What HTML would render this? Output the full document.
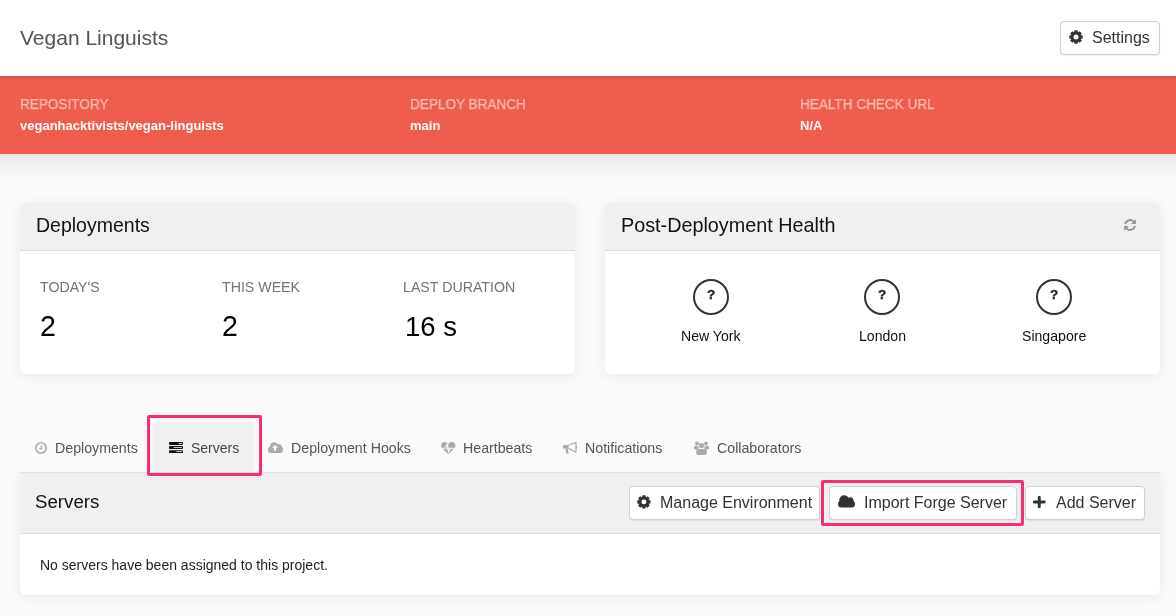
<!DOCTYPE html>
<html><head><meta charset="utf-8">
<style>
*{margin:0;padding:0;box-sizing:border-box}
html,body{width:1176px;height:616px;overflow:hidden}
body{background:#fafafa;font-family:"Liberation Sans",sans-serif;position:relative}
.a{position:absolute;white-space:nowrap;will-change:transform}
#hdr{position:absolute;left:0;top:0;width:1176px;height:76px;background:#fff}
#band{position:absolute;left:0;top:76px;width:1176px;height:78px;background:linear-gradient(rgba(0,0,0,.12),rgba(0,0,0,.04) 3px,rgba(0,0,0,0) 6px),#ee5d4d}
#bandsh{position:absolute;left:0;top:154px;width:1176px;height:36px;background:linear-gradient(#e6e6e6 0px,#ececec 5px,#f2f2f2 12px,#f7f7f7 20px,#f9f9f9 27px,#fafafa 36px)}
.lbl{color:#fbbcb5;-webkit-text-stroke:.25px #fbbcb5;font-size:14.5px;line-height:14.5px;transform:scaleX(.935);transform-origin:0 0}
.val{color:#fff;font-size:13px;line-height:13px;font-weight:bold}
.btn{position:absolute;background:#fff;border:1px solid #cfcfcf;border-radius:4px;box-shadow:0 1px 1px rgba(0,0,0,.08)}
.card{position:absolute;background:#fff;border-radius:6px;box-shadow:0 2px 12px rgba(0,0,0,.075);overflow:hidden}
.chead{position:absolute;left:0;top:0;width:100%;height:48px;background:#f0f0f0;border-bottom:1px solid #dcdcdc}
.stat{color:#6c757d;font-size:14.2px;line-height:14.2px}
.num{color:#000;font-size:27.5px;line-height:27.5px}
.circ{position:absolute;width:36px;height:36px;border:2px solid #333;border-radius:50%}
.q{position:absolute;left:0;top:7.3px;-webkit-text-stroke:.4px #2a2a2a;width:32px;text-align:center;font-weight:bold;font-size:13.5px;line-height:13.5px;color:#2a2a2a;will-change:transform}
.city{color:#111;font-size:14.1px;line-height:14.1px}
.tab{color:#555;font-size:14.2px;line-height:14.2px}
.ico{position:absolute}
.pink{position:absolute;border:3px solid #f72d6f;z-index:5;border-radius:3px}
.bt{color:#333;font-size:16px;line-height:16px}
</style></head><body>
<div id="hdr"></div>
<div class="a" style="left:20px;top:27.1px;font-size:21px;line-height:21px;color:#555">Vegan Linguists</div>
<div class="btn" style="left:1060px;top:21px;width:100px;height:34px"></div>
<svg class="ico" style="left:1068.7px;top:30px" width="14" height="14" viewBox="0 0 14 14"><path fill="#333" fill-rule="evenodd" d="M5.13 2.04 L5.49 0.27 L8.51 0.27 L8.87 2.04 L9.19 2.17 L10.70 1.17 L12.83 3.30 L11.83 4.81 L11.96 5.13 L13.73 5.49 L13.73 8.51 L11.96 8.87 L11.83 9.19 L12.83 10.70 L10.70 12.83 L9.19 11.83 L8.87 11.96 L8.51 13.73 L5.49 13.73 L5.13 11.96 L4.81 11.83 L3.30 12.83 L1.17 10.70 L2.17 9.19 L2.04 8.87 L0.27 8.51 L0.27 5.49 L2.04 5.13 L2.17 4.81 L1.17 3.30 L3.30 1.17 L4.81 2.17 Z M4.50 7.00 a2.50 2.50 0 1 0 5.00 0 a2.50 2.50 0 1 0 -5.00 0 Z"/></svg>
<div class="a bt" style="left:1092px;top:29.6px">Settings</div>

<div id="band"></div>
<div id="bandsh"></div>
<div class="a lbl" style="left:20px;top:96.9px">REPOSITORY</div>
<div class="a val" style="left:20px;top:119px">veganhacktivists/vegan-linguists</div>
<div class="a lbl" style="left:410px;top:96.9px">DEPLOY BRANCH</div>
<div class="a val" style="left:410px;top:119px">main</div>
<div class="a lbl" style="left:800px;top:96.9px">HEALTH CHECK URL</div>
<div class="a val" style="left:800px;top:119px">N/A</div>

<!-- Deployments card -->
<div class="card" style="left:20px;top:203px;width:555px;height:171px"><div class="chead"></div></div>
<div class="a" style="left:36px;top:215.5px;font-size:19.5px;line-height:19.5px;color:#111">Deployments</div>
<div class="a stat" style="left:40px;top:280.1px">TODAY'S</div>
<div class="a stat" style="left:222px;top:280.1px">THIS WEEK</div>
<div class="a stat" style="left:403px;top:280.1px">LAST DURATION</div>
<div class="a num" style="left:39.6px;top:312px;font-size:28.6px;line-height:28.6px">2</div>
<div class="a num" style="left:221.6px;top:312px;font-size:28.6px;line-height:28.6px">2</div>
<div class="a num" style="left:405px;top:313.2px">16 s</div>

<!-- Health card -->
<div class="card" style="left:605px;top:203px;width:555px;height:171px"><div class="chead"></div></div>
<div class="a" style="left:621px;top:215.5px;font-size:19.8px;line-height:19.8px;color:#111">Post-Deployment Health</div>
<svg class="ico" style="left:1124px;top:219px" width="12" height="12" viewBox="0 0 12 12"><g fill="none" stroke="#8b9399" stroke-width="1.8"><path d="M1.2 5.2 A4.9 4.9 0 0 1 9.6 2.6"/><path d="M10.8 6.8 A4.9 4.9 0 0 1 2.4 9.4"/></g><g fill="#8b9399"><path d="M11.9 0.2 V4.9 H7.2 Z"/><path d="M0.1 11.8 V7.1 H4.8 Z"/></g></svg>
<div class="circ" style="left:693px;top:279px"><div class="q">?</div></div>
<div class="circ" style="left:864px;top:279px"><div class="q">?</div></div>
<div class="circ" style="left:1036px;top:279px"><div class="q">?</div></div>
<div class="a city" style="left:681px;top:328.5px">New York</div>
<div class="a city" style="left:859px;top:328.5px">London</div>
<div class="a city" style="left:1022px;top:328.5px">Singapore</div>

<!-- Tabs -->
<div style="position:absolute;left:153px;top:422px;width:101px;height:50px;background:#f0f0f0;border-radius:5px 5px 0 0;box-shadow:0 0 3px rgba(0,0,0,.04)"></div>
<div class="pink" style="left:147.3px;top:414.5px;width:114.6px;height:61.3px;border-radius:2px"></div>
<div class="a tab" style="left:55px;top:440.5px">Deployments</div>
<div class="a tab" style="left:190.6px;top:440.5px;color:#444;font-size:14px">Servers</div>
<div class="a tab" style="left:291px;top:440.5px">Deployment Hooks</div>
<div class="a tab" style="left:463px;top:440.5px">Heartbeats</div>
<div class="a tab" style="left:585px;top:440.5px">Notifications</div>
<div class="a tab" style="left:716.5px;top:440.5px">Collaborators</div>

<!-- Servers panel -->
<div class="card" style="left:20px;top:472px;width:1140px;height:123px;border-radius:0 0 6px 6px;border-top:1px solid #dde2e6;clip-path:inset(0 -30px -30px -30px)">
  <div class="chead" style="height:61px"></div>
</div>
<div class="a" style="left:35px;top:493px;font-size:18.7px;line-height:18.7px;color:#111">Servers</div>
<div class="a" style="left:40px;top:557.8px;font-size:14px;line-height:14px;color:#222">No servers have been assigned to this project.</div>
<div class="btn" style="left:628.8px;top:486.4px;width:191.4px;height:33.6px"></div>
<div class="a bt" style="left:660px;top:495px">Manage Environment</div>
<div class="btn" style="left:829.4px;top:486.4px;width:187.2px;height:33.6px"></div>
<div class="a bt" style="left:864px;top:495px">Import Forge Server</div>
<div class="btn" style="left:1025.2px;top:486.4px;width:119.4px;height:33.6px"></div>
<div class="a bt" style="left:1055.5px;top:495px">Add Server</div>
<div class="pink" style="left:821.2px;top:479.8px;width:203px;height:46px;border-radius:2px"></div>

<!-- tab icons -->
<svg class="ico" style="left:35px;top:442px" width="12" height="12" viewBox="0 0 12 12"><circle cx="6" cy="6" r="5.2" fill="none" stroke="#aaa" stroke-width="1.6"/><path d="M6.4 3.2 V6.6 H4.2" fill="none" stroke="#aaa" stroke-width="1.3"/></svg>
<svg class="ico" style="left:168.5px;top:442px" width="14" height="11" viewBox="0 0 14 11"><g fill="#111"><rect x="0" y="0" width="14" height="2.9" rx="0.8"/><rect x="0" y="4.1" width="14" height="2.9" rx="0.8"/><rect x="0" y="8.2" width="14" height="2.9" rx="0.8"/></g><g fill="#fff"><rect x="9.4" y="1.05" width="3.7" height="0.8" rx="0.4"/><rect x="4.4" y="5.15" width="8.7" height="0.8" rx="0.4"/><rect x="7.3" y="9.25" width="5.8" height="0.8" rx="0.4"/></g></svg>
<svg class="ico" style="left:268px;top:442px" width="15" height="11" viewBox="0 0 15 11"><g fill="#aaa"><circle cx="6.2" cy="4.4" r="4.2"/><circle cx="11" cy="4.6" r="2.6"/><rect x="0" y="4.6" width="15" height="6.4" rx="3.2"/></g><path fill="#fafafa" d="M7 3.1 L10.1 5.7 H8.1 V8.7 H5.9 V5.7 H3.9 Z"/></svg>
<svg class="ico" style="left:441px;top:442px" width="14.5" height="12" viewBox="0 0 14.5 12"><g fill="#aaa"><circle cx="3.7" cy="3.7" r="3.6"/><circle cx="10.8" cy="3.7" r="3.6"/><path d="M1.8 7.2 H12.7 L7.25 12 Z"/></g><path d="M0 6.3 H4.5 L6 1.5 L7.5 10 L9.2 6.3 H14.5" fill="none" stroke="#fafafa" stroke-width="1.1"/></svg>
<svg class="ico" style="left:563.4px;top:442px" width="14" height="12" viewBox="0 0 14 12"><g fill="#aaa"><rect x="0" y="2.9" width="5.6" height="3.6" rx="0.5"/><path d="M2.4 6.4 H4.9 L5.5 11.7 H3.3 Z"/><rect x="12.8" y="4.3" width="1.2" height="2" /></g><path d="M5.6 3 L13 0.5 V10.2 L5.6 6.4" fill="none" stroke="#aaa" stroke-width="1.2" stroke-linejoin="round"/></svg>
<svg class="ico" style="left:694px;top:441px" width="15" height="14" viewBox="0 0 15 14"><g fill="#aaa"><circle cx="3" cy="2.4" r="1.9"/><circle cx="12" cy="2.4" r="1.9"/><circle cx="7.5" cy="4.6" r="2.6"/><rect x="0" y="4.7" width="4.6" height="3.9" rx="1.5"/><rect x="10.4" y="4.7" width="4.6" height="3.9" rx="1.5"/><rect x="2.2" y="8" width="10.6" height="6" rx="2"/></g></svg>
<!-- button icons -->
<svg class="ico" style="left:637px;top:495.2px" width="14" height="14" viewBox="0 0 14 14"><path fill="#333" fill-rule="evenodd" d="M5.07 2.03 L5.42 0.26 L8.38 0.26 L8.73 2.03 L9.05 2.16 L10.54 1.16 L12.64 3.26 L11.64 4.75 L11.77 5.07 L13.54 5.42 L13.54 8.38 L11.77 8.73 L11.64 9.05 L12.64 10.54 L10.54 12.64 L9.05 11.64 L8.73 11.77 L8.38 13.54 L5.42 13.54 L5.07 11.77 L4.75 11.64 L3.26 12.64 L1.16 10.54 L2.16 9.05 L2.03 8.73 L0.26 8.38 L0.26 5.42 L2.03 5.07 L2.16 4.75 L1.16 3.26 L3.26 1.16 L4.75 2.16 Z M4.45 6.90 a2.45 2.45 0 1 0 4.90 0 a2.45 2.45 0 1 0 -4.90 0 Z"/></svg>
<svg class="ico" style="left:838px;top:495.3px" width="17" height="12.5" viewBox="0 0 17 12.5"><g fill="#333"><circle cx="6.2" cy="5.1" r="4.9"/><circle cx="12.3" cy="5.3" r="3.1"/><rect x="0" y="5.4" width="17" height="7.1" rx="3.5"/></g></svg>
<svg class="ico" style="left:1033px;top:495.7px" width="12.5" height="12" viewBox="0 0 12.5 12"><path d="M6.25 1.2 V10.8 M1.2 6 H11.3" fill="none" stroke="#333" stroke-width="2.9" stroke-linecap="round"/></svg>
</body></html>
